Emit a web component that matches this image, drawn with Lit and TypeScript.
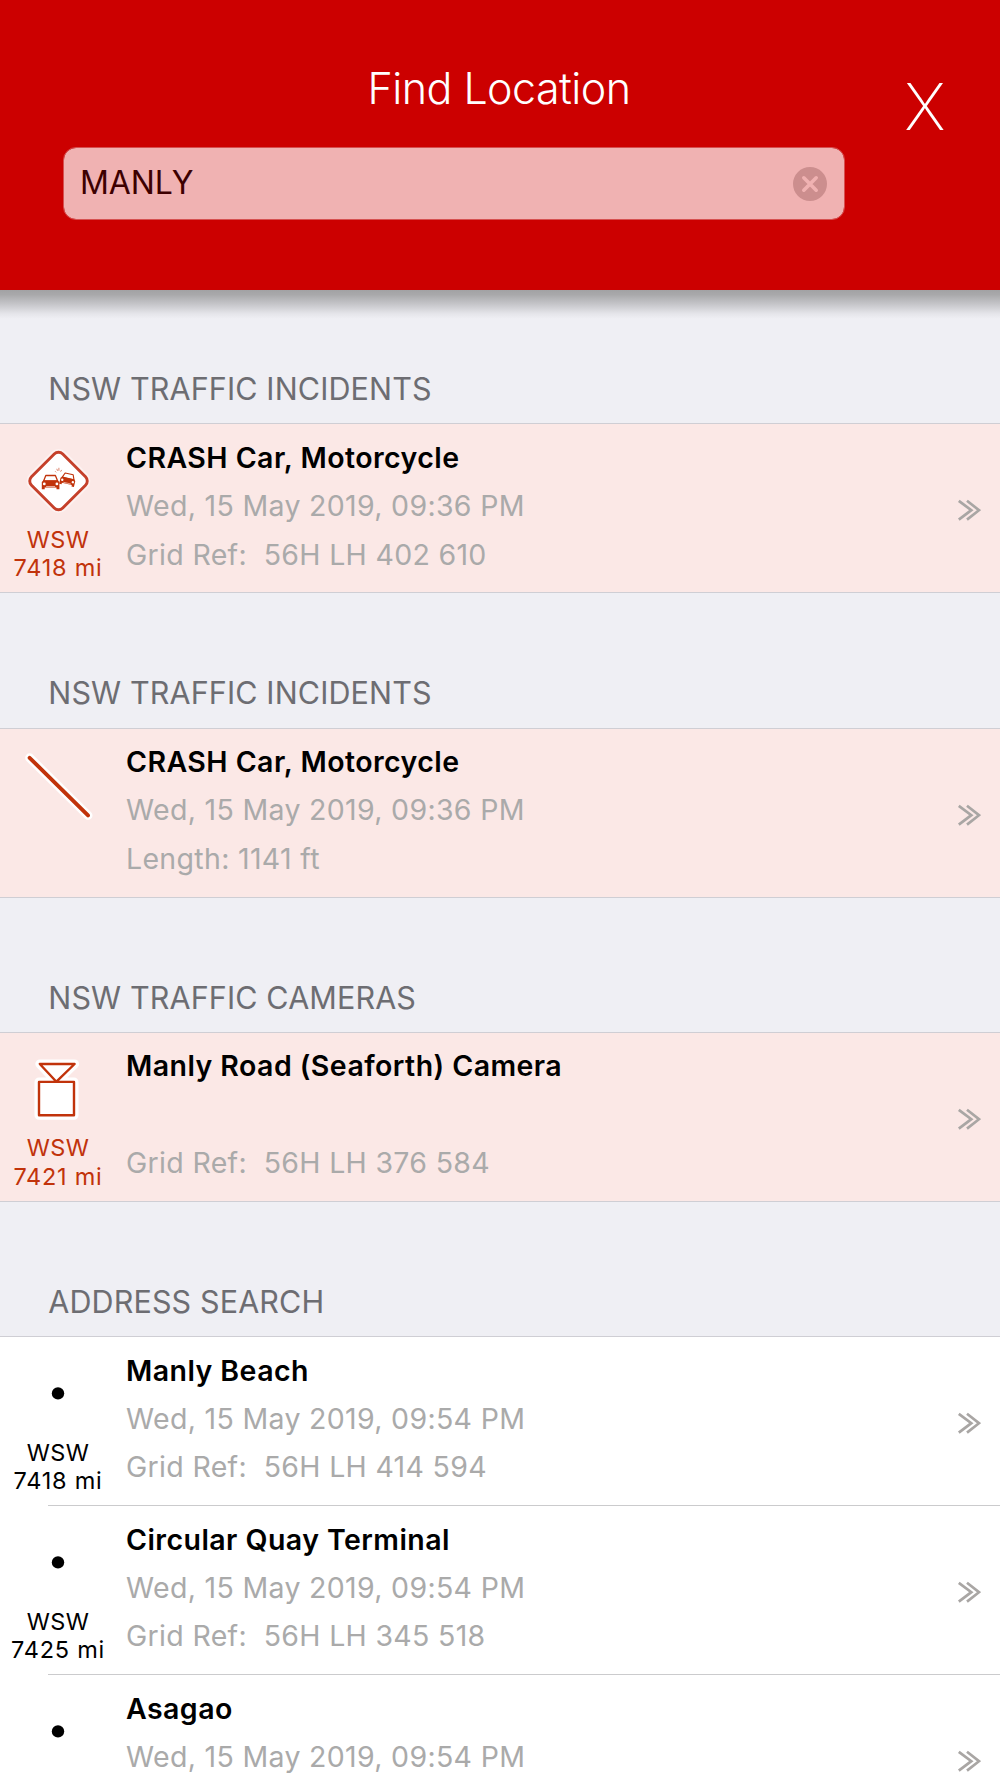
import { LitElement, html, svg, css, nothing } from "lit";
import { customElement, property } from "lit/decorators.js";

type IconName = "crash" | "line" | "camera" | "dot";

interface Item {
  icon: IconName;
  title: string;
  line2: string;
  line3: string;
  bearing?: string;
  distance?: string;
}

interface Group {
  heading: string;
  tinted: boolean;
  items: Item[];
}

const GROUPS: Group[] = [
  {
    heading: "NSW TRAFFIC INCIDENTS",
    tinted: true,
    items: [
      {
        icon: "crash",
        title: "CRASH Car, Motorcycle",
        line2: "Wed, 15 May 2019, 09:36 PM",
        line3: "Grid Ref:  56H LH 402 610",
        bearing: "WSW",
        distance: "7418 mi",
      },
    ],
  },
  {
    heading: "NSW TRAFFIC INCIDENTS",
    tinted: true,
    items: [
      {
        icon: "line",
        title: "CRASH Car, Motorcycle",
        line2: "Wed, 15 May 2019, 09:36 PM",
        line3: "Length: 1141 ft",
      },
    ],
  },
  {
    heading: "NSW TRAFFIC CAMERAS",
    tinted: true,
    items: [
      {
        icon: "camera",
        title: "Manly Road (Seaforth) Camera",
        line2: "",
        line3: "Grid Ref:  56H LH 376 584",
        bearing: "WSW",
        distance: "7421 mi",
      },
    ],
  },
  {
    heading: "ADDRESS SEARCH",
    tinted: false,
    items: [
      {
        icon: "dot",
        title: "Manly Beach",
        line2: "Wed, 15 May 2019, 09:54 PM",
        line3: "Grid Ref:  56H LH 414 594",
        bearing: "WSW",
        distance: "7418 mi",
      },
      {
        icon: "dot",
        title: "Circular Quay Terminal",
        line2: "Wed, 15 May 2019, 09:54 PM",
        line3: "Grid Ref:  56H LH 345 518",
        bearing: "WSW",
        distance: "7425 mi",
      },
      {
        icon: "dot",
        title: "Asagao",
        line2: "Wed, 15 May 2019, 09:54 PM",
        line3: "",
      },
    ],
  },
];

const car = svg`
  <path d="M4.2 0.9 H13.8 L16 6.4 H2 Z" fill="#fff" stroke="#c1330b" stroke-width="1.3" stroke-linejoin="round"/>
  <path d="M1.6 6 H16.4 L17.8 7.5 V14.6 H14.9 V12.8 H3.1 V14.6 H0.2 V7.5 Z" fill="#c1330b"/>
  <circle cx="2.7" cy="9.3" r="1.4" fill="#fff"/>
  <circle cx="15.3" cy="9.3" r="1.4" fill="#fff"/>
  <path d="M4.5 11.9H13.5" stroke="#fff" stroke-width=".6"/>
`;

const ICONS = {
  crash: svg`
    <rect x="35.5" y="34" width="46" height="46" rx="7.5" transform="rotate(45 58.5 57)" fill="none" stroke="#fff" stroke-opacity="0.45" stroke-width="5"/>
    <rect x="36.4" y="34.9" width="44.2" height="44.2" rx="6" transform="rotate(45 58.5 57)" fill="#fff" stroke="#c5402a" stroke-width="2.9"/>
    <g transform="translate(41.6 50.6)">${car}</g>
    <g transform="translate(61.8 47.4) rotate(13) scale(.86)">${car}</g>
    <path d="M55.2 47.3l1 1M56.8 44.8l.7 2M58.9 43.8l0 3M61.6 45.9l-1 1.8" stroke="#c1330b" stroke-width=".8" opacity=".75"/>`,
  line: svg`
    <path d="M29.6 28.8L88 86.4" stroke="#fff" stroke-width="9" stroke-linecap="round"/>
    <path d="M29.6 28.8L88 86.4" stroke="#c1330b" stroke-width="3.9" stroke-linecap="round"/>`,
  camera: svg`
    <path d="M39.8 31H74.6L56.4 48.7ZM39 48.9H74V82.2H39Z" fill="#fff" stroke="#fff" stroke-width="9" stroke-linejoin="round"/>
    <path d="M39.8 31H74.6L56.4 48.7ZM39 48.9H74V82.2H39Z" fill="#fff" stroke="#c1330b" stroke-width="2.4" stroke-linejoin="round"/>`,
  dot: svg`<circle cx="58" cy="56.4" r="6.2" fill="#000"/>`,
};

@customElement("result-row")
class ResultRow extends LitElement {
  @property({ attribute: false }) item!: Item;
  @property({ type: Boolean, reflect: true }) tinted = false;

  static styles = css`
    :host {
      display: flex;
      height: 169px;
      box-sizing: border-box;
      background: #fff;
      color: #000;
    }
    :host([tinted]) {
      height: 168px;
      background: #fbe8e6;
    }
    .side {
      width: 116px;
      flex: none;
      display: flex;
      flex-direction: column;
      align-items: center;
      font-size: 23.5px;
      line-height: 28.3px;
      white-space: pre;
    }
    :host([tinted]) .side {
      color: #c1330b;
    }
    .icon {
      display: block;
      width: 116px;
      height: 102px;
      margin-bottom: -0.4px;
      flex: none;
    }
    .bearing {
      letter-spacing: 0.3px;
    }
    .distance {
      letter-spacing: 0.75px;
    }
    .lines {
      flex: 1;
      padding: 9.6px 0 0 10px;
      display: flex;
      flex-direction: column;
      white-space: pre;
    }
    .line {
      height: 48.3px;
      line-height: 48.3px;
      font-size: 28.5px;
      letter-spacing: 0.32px;
      color: #aaa;
    }
    .title {
      color: #000;
      font-weight: 600;
      letter-spacing: 0.44px;
    }
    .go {
      flex: none;
      width: 24px;
      height: 22px;
      padding: 75px 19px 0 0;
    }
  `;

  render() {
    const { icon, title, line2, line3, bearing, distance } = this.item;
    return html`
      <div class="side">
        <svg class="icon" viewBox="0 0 116 102" fill="none">${ICONS[icon]}</svg>
        ${bearing ? html`<span class="bearing">${bearing}</span>` : nothing}
        ${distance ? html`<span class="distance">${distance}</span>` : nothing}
      </div>
      <div class="lines">
        <span class="line title">${title}</span>
        <span class="line">${line2}</span>
        <span class="line">${line3}</span>
      </div>
      <svg class="go" viewBox="0 0 24 22" fill="none" stroke="#a9a6a4" stroke-width="2.7">
        <path d="M1.8 1.8L14.3 11.2L1.8 20.6M10 1.8L22 11.2L10 20.6" />
      </svg>
    `;
  }
}

@customElement("app-root")
class AppRoot extends LitElement {
  static styles = css`
    :host {
      display: block;
      height: 1778px;
      overflow: hidden;
      background: #efeff4;
      font-family: Inter, "Liberation Sans", sans-serif;
    }
    .header {
      height: 290px;
      box-sizing: border-box;
      background: #cc0000;
      display: grid;
      grid-template-columns: 63px 782px 1fr;
      grid-template-rows: 147px 73px;
    }
    .heading {
      grid-column: 1 / -1;
      grid-row: 1;
      margin: 0;
      padding: 62px 2px 0 0;
      line-height: 52px;
      text-align: center;
      color: #fff;
      font-size: 43px;
      font-weight: 300;
      letter-spacing: -0.55px;
    }
    .close {
      grid-column: 3;
      grid-row: 1;
      padding: 68px 0 0 5px;
      justify-self: center;
      line-height: 78px;
      font-size: 64.5px;
      font-weight: 200;
      color: #fff;
    }
    .search {
      grid-column: 2;
      grid-row: 2;
      box-sizing: border-box;
      border: 1px solid #d65050;
      border-radius: 13px;
      background: #f0b2b2;
      background-clip: padding-box;
      display: flex;
      align-items: center;
      justify-content: space-between;
      height: 73px;
      padding: 0 17px 0 16px;
      color: #3d0000;
      font-size: 32px;
    }
    .query {
      padding-bottom: 2px;
      letter-spacing: -0.1px;
    }
    .clear {
      width: 34px;
      height: 34px;
      padding-top: 1px;
    }
    .shadow {
      height: 30px;
      background: linear-gradient(#a2a2a4, #a8a8aa 15%, #c8c8cc 50%, #e4e4e9 78%, #efeff4 96%);
    }
    .group-heading {
      height: 134.2px;
      box-sizing: border-box;
      padding: 81px 0 0 48.3px;
      line-height: 38px;
      font-size: 30.5px;
      letter-spacing: 0.12px;
      color: #6d6d72;
      white-space: pre;
    }
    .first {
      height: 103.4px;
      padding-top: 50px;
    }
    .rows {
      border-top: 1px solid #cfced4;
      border-bottom: 1px solid #cfced4;
    }
    .divider {
      height: 1px;
      background: linear-gradient(90deg, #fff 48px, #cbcbcd 48px);
      margin-top: -1px;
      position: relative;
    }
  `;

  render() {
    return html`
      <header class="header">
        <h1 class="heading">Find Location</h1>
        <span class="close">X</span>
        <div class="search">
          <span class="query">MANLY</span>
          <svg class="clear" viewBox="0 0 34 34" fill="none">
            <circle cx="17" cy="17" r="17" fill="#cc8e8e" />
            <path d="M10.8 10.8L23.2 23.2M23.2 10.8L10.8 23.2" stroke="#f0b2b2" stroke-width="3.6" stroke-linecap="round" />
          </svg>
        </div>
      </header>
      <div class="shadow"></div>
      ${GROUPS.map(
        (g, i) => html`
          <div class="group-heading ${i === 0 ? "first" : ""}">${g.heading}</div>
          <div class="rows">
            ${g.items.map(
              (item, n) => html`
                ${n > 0 ? html`<div class="divider"></div>` : nothing}
                <result-row .item=${item} ?tinted=${g.tinted}></result-row>
              `
            )}
          </div>
        `
      )}
    `;
  }
}
